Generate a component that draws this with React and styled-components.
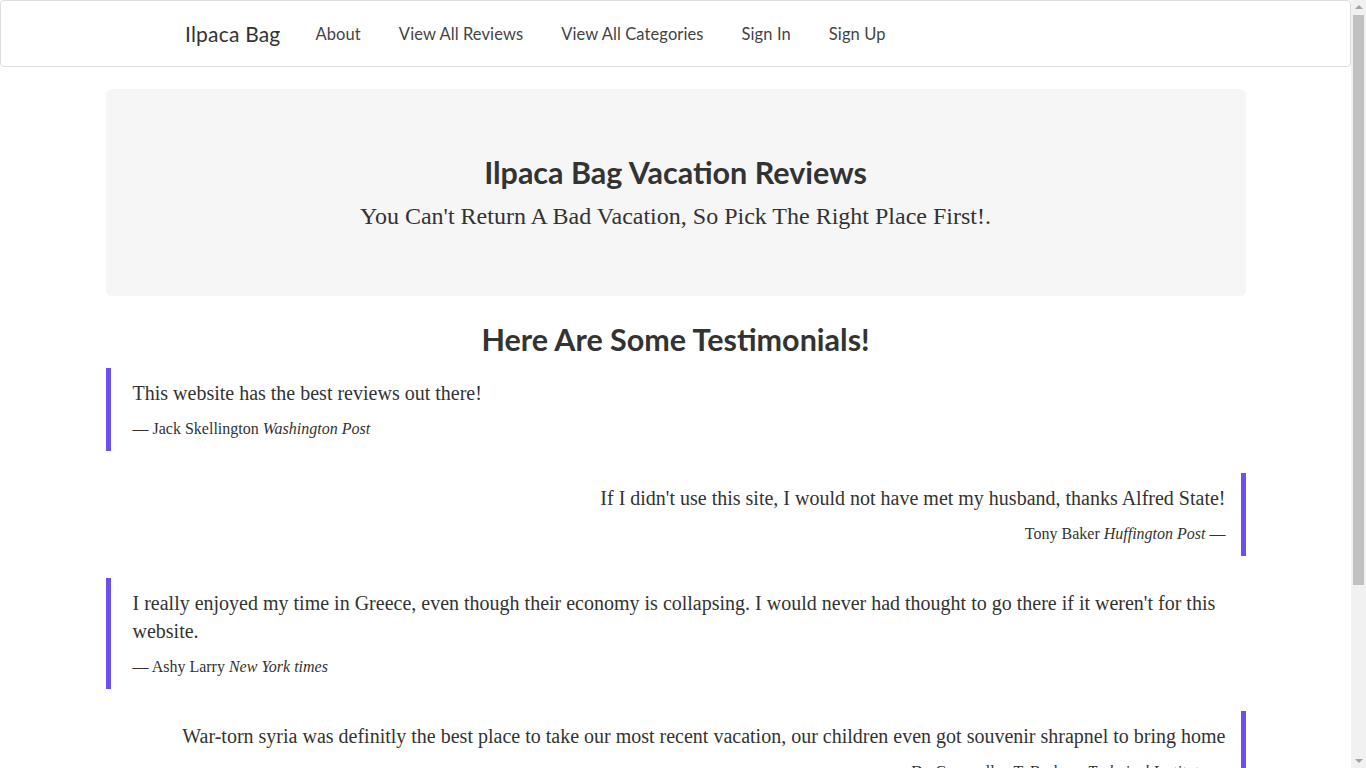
import React from "react";
import styled, { createGlobalStyle } from "styled-components";

const GlobalStyle = createGlobalStyle`
  html, body {
    margin: 0;
    padding: 0;
    background: #fff;
  }
  body {
    font-family: "Liberation Serif", "Times New Roman", serif;
    color: #333;
  }
  * {
    box-sizing: border-box;
  }
`;

const Page = styled.div`
  width: 1351px;
`;

const NavBar = styled.nav`
  height: 67px;
  border: 1px solid #dcdcdc;
  border-radius: 4px;
  background: #fff;
  display: flex;
  align-items: center;
  padding-left: 184px;
  font-family: "Lato", "Open Sans", sans-serif;
`;

const Brand = styled.a`
  font-size: 21px;
  color: #333;
  margin-right: 16px;
  letter-spacing: 0.2px;
  text-decoration: none;
`;

const NavLink = styled.a`
  font-size: 16.5px;
  color: #444;
  padding: 0 19px;
  letter-spacing: 0.1px;
  text-decoration: none;
`;

const Container = styled.div`
  width: 1140px;
  margin: 22px auto 0;
  padding-bottom: 200px;
`;

const Jumbotron = styled.div`
  background: #f6f6f6;
  border-radius: 6px;
  height: 207px;
  display: flex;
  flex-direction: column;
  align-items: center;
  padding-top: 65px;
`;

const Title = styled.h1`
  margin: 0;
  font-family: "Lato", "Open Sans", sans-serif;
  font-weight: 700;
  font-size: 30.5px;
  line-height: 36px;
  color: #333;
`;

const Lead = styled.p`
  margin: 9px 0 0;
  font-size: 24px;
  line-height: 34px;
  color: #333;
`;

const SectionTitle = styled.h2`
  margin: 24px 0 9px;
  text-align: center;
  font-family: "Lato", "Open Sans", sans-serif;
  font-weight: 700;
  font-size: 30.5px;
  line-height: 39px;
  color: #333;
`;

const Quote = styled.blockquote`
  margin: 0 0 22px;
  padding: 11px ${(p) => (p.$reverse ? "15px" : "20px")} 11px
    ${(p) => (p.$reverse ? "20px" : "22px")};
  border-left: ${(p) => (p.$reverse ? "none" : "5px solid #6a50f0")};
  border-right: ${(p) => (p.$reverse ? "5px solid #6a50f0" : "none")};
  text-align: ${(p) => (p.$reverse ? "right" : "left")};
`;

const QuoteText = styled.p`
  margin: 0 0 10px;
  font-size: 20px;
  line-height: 28px;
  color: #333;
`;

const Cite = styled.footer`
  font-size: 16px;
  line-height: 23px;
  color: #333;

  em {
    font-style: italic;
  }
`;

const ScrollTrack = styled.div`
  position: fixed;
  top: 0;
  right: 0;
  width: 15px;
  height: 100vh;
  background: #f1f1f1;
  display: flex;
  flex-direction: column;
  align-items: center;
`;

const ScrollArrow = styled.div`
  width: 0;
  height: 0;
  margin: 5px 0;
  border-left: 4px solid transparent;
  border-right: 4px solid transparent;
  ${(p) =>
    p.$down ? "border-top: 4px solid #a3a3a3;" : "border-bottom: 4px solid #a3a3a3;"}
`;

const ScrollThumb = styled.div`
  width: 11px;
  height: 570px;
  margin-top: 1px;
  background: #c1c1c1;
  flex: none;
`;

const ScrollSpacer = styled.div`
  flex: 1;
`;

const testimonials = [
  {
    text: "This website has the best reviews out there!",
    name: "Jack Skellington",
    source: "Washington Post",
  },
  {
    text: "If I didn't use this site, I would not have met my husband, thanks Alfred State!",
    name: "Tony Baker",
    source: "Huffington Post",
    reverse: true,
  },
  {
    text: "I really enjoyed my time in Greece, even though their economy is collapsing. I would never had thought to go there if it weren't for this website.",
    name: "Ashy Larry",
    source: "New York times",
  },
  {
    text: "War-torn syria was definitly the best place to take our most recent vacation, our children even got souvenir shrapnel to bring home",
    name: "Dr. Cornwalley T. Burbans",
    source: "Technical Institute",
    reverse: true,
  },
];

export default function App() {
  return (
    <Page>
      <GlobalStyle />
      <NavBar>
        <Brand href="#">Ilpaca Bag</Brand>
        <NavLink href="#">About</NavLink>
        <NavLink href="#">View All Reviews</NavLink>
        <NavLink href="#">View All Categories</NavLink>
        <NavLink href="#">Sign In</NavLink>
        <NavLink href="#">Sign Up</NavLink>
      </NavBar>
      <Container>
        <Jumbotron>
          <Title>Ilpaca Bag Vacation Reviews</Title>
          <Lead>You Can't Return A Bad Vacation, So Pick The Right Place First!.</Lead>
        </Jumbotron>
        <SectionTitle>Here Are Some Testimonials!</SectionTitle>
        {testimonials.map((t) => (
          <Quote key={t.name} $reverse={t.reverse}>
            <QuoteText>{t.text}</QuoteText>
            <Cite>
              {t.reverse ? (
                <>
                  {t.name} <em>{t.source}</em> —
                </>
              ) : (
                <>
                  — {t.name} <em>{t.source}</em>
                </>
              )}
            </Cite>
          </Quote>
        ))}
      </Container>
      <ScrollTrack>
        <ScrollArrow />
        <ScrollThumb />
        <ScrollSpacer />
        <ScrollArrow $down />
      </ScrollTrack>
    </Page>
  );
}
